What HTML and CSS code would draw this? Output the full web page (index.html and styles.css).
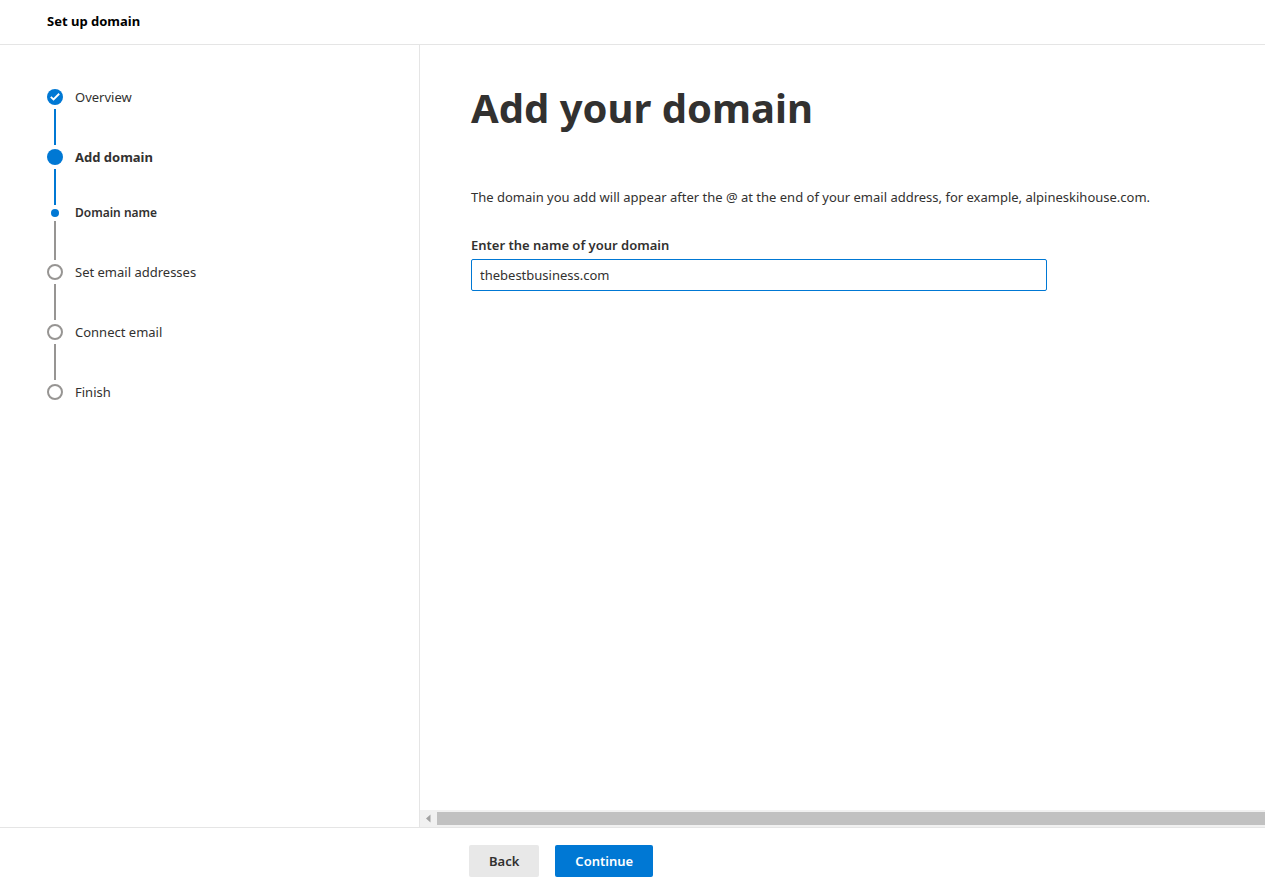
FILE: index.html
```html
<!DOCTYPE html>
<html lang="en">
<head>
<meta charset="utf-8">
<meta name="viewport" content="width=device-width, initial-scale=1">
<title>Set up domain</title>
<link rel="stylesheet" href="styles.css">
</head>
<body>
<div class="wizard">
  <header class="wizard-header">Set up domain</header>
  <div class="wizard-body">
    <nav class="steps-panel" aria-label="Setup steps">
      <ol class="steps">
        <li class="step step-done">
          <span class="marker">
            <svg viewBox="0 0 16 16" width="16" height="16" aria-hidden="true"><circle cx="8" cy="8" r="8" fill="#0078d4"/><path d="M3.8 7.9 6.5 10.4 12.2 4.8" fill="none" stroke="#fff" stroke-width="1.9"/></svg>
          </span>
          <span class="step-label">Overview</span>
        </li>
        <li class="step step-done step-current">
          <span class="marker"><span class="dot dot-filled"></span></span>
          <span class="step-label">Add domain</span>
        </li>
        <li class="step step-sub" aria-current="step">
          <span class="marker"><span class="dot dot-small"></span></span>
          <span class="step-label">Domain name</span>
        </li>
        <li class="step">
          <span class="marker"><span class="dot"></span></span>
          <span class="step-label">Set email addresses</span>
        </li>
        <li class="step">
          <span class="marker"><span class="dot"></span></span>
          <span class="step-label">Connect email</span>
        </li>
        <li class="step">
          <span class="marker"><span class="dot"></span></span>
          <span class="step-label">Finish</span>
        </li>
      </ol>
    </nav>
    <main class="content">
      <div class="content-main">
        <h1 class="title">Add your domain</h1>
        <p class="description">The domain you add will appear after the @ at the end of your email address, for example, alpineskihouse.com.</p>
        <label class="field-label" for="domain">Enter the name of your domain</label>
        <input class="field-input" id="domain" type="text" value="thebestbusiness.com">
      </div>
      <div class="scrollbar" aria-hidden="true">
        <svg class="scroll-arrow" viewBox="0 0 17 13" width="17" height="13"><path d="M10.5 2.5v8L6 6.5z" fill="#a3a3a3"/></svg>
        <span class="scroll-thumb"></span>
      </div>
    </main>
  </div>
  <footer class="wizard-footer">
    <button class="button" type="button">Back</button>
    <button class="button button-primary" type="button">Continue</button>
  </footer>
</div>
</body>
</html>
```
FILE: styles.css
```css
* {
  box-sizing: border-box;
}

body {
  margin: 0;
  background: #fff;
  color: #323130;
  font-family: "Segoe UI", "Noto Sans", "Open Sans", sans-serif;
  font-size: 13px;
}

.wizard {
  display: flex;
  flex-direction: column;
  min-height: 100vh;
}

.wizard-header {
  padding: 11px 47px 13px;
  border-bottom: 1px solid #e5e5e5;
  color: #000;
  font-weight: 700;
  line-height: 20px;
}

.wizard-body {
  display: flex;
  flex: 1;
}

.steps-panel {
  flex: 0 0 420px;
  padding: 44px 47px;
  border-right: 1px solid #e5e5e5;
}

.steps {
  margin: 0;
  padding: 0;
  list-style: none;
}

.step {
  display: flex;
  gap: 12px;
  min-height: 60px;
  line-height: 16px;
}

.marker {
  display: flex;
  flex-direction: column;
  align-items: center;
  gap: 4px;
  width: 16px;
  padding-bottom: 4px;
}

.marker svg {
  display: block;
}

.step:not(:last-child) .marker::after {
  content: "";
  flex: 1;
  width: 2px;
  background: #979593;
}

.step.step-done .marker::after {
  background: #0078d4;
}

.dot {
  width: 16px;
  height: 16px;
  border: 2px solid #979593;
  border-radius: 50%;
}

.dot-filled {
  border: 0;
  background: #0078d4;
}

.dot-small {
  width: 8px;
  height: 8px;
  border: 0;
  background: #0078d4;
}

.step-current {
  font-weight: 700;
}

.step-sub {
  min-height: 55px;
  font-size: 12px;
  font-weight: 600;
  line-height: 8px;
}

.content {
  display: flex;
  flex: 1;
  flex-direction: column;
  min-width: 0;
}

.content-main {
  flex: 1;
  padding: 32px 51px;
}

.title {
  margin: 0 0 48px;
  font-size: 40px;
  font-weight: 700;
  line-height: 62px;
}

.description {
  margin: 0 0 28px;
  line-height: 20px;
}

.field-label {
  display: block;
  margin-bottom: 4px;
  font-weight: 600;
  line-height: 20px;
}

.field-input {
  display: block;
  width: 100%;
  max-width: 576px;
  height: 32px;
  padding: 0 8px;
  border: 1px solid #0078d4;
  border-radius: 2px;
  outline: 0;
  background: #fff;
  color: #323130;
  font: inherit;
}

.scrollbar {
  display: flex;
  padding: 2px 0;
  background: #f1f1f1;
}

.scroll-thumb {
  flex: 1;
  background: #c1c1c1;
}

.wizard-footer {
  display: flex;
  gap: 16px;
  padding: 17px 16px 10px 469px;
  border-top: 1px solid #e5e5e5;
}

.button {
  height: 32px;
  padding: 0 20px;
  border: 0;
  border-radius: 2px;
  background: #e8e8e8;
  color: #323130;
  font: inherit;
  font-weight: 600;
}

.button-primary {
  background: #0078d4;
  color: #fff;
}
```
